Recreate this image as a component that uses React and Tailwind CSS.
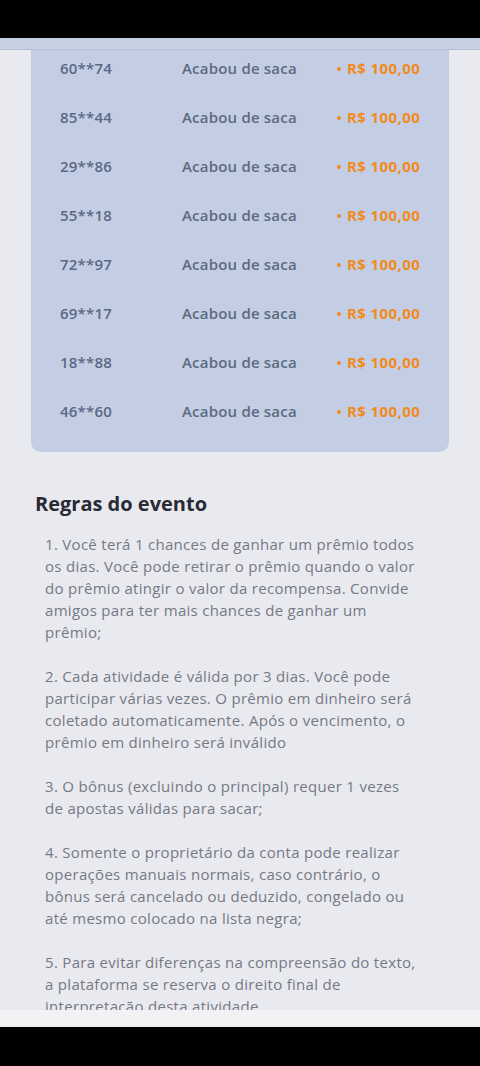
import React from 'react';

const winners = ['60**74', '85**44', '29**86', '55**18', '72**97', '69**17', '18**88', '46**60'];

// lines broken as in the app's layout
const rules = [
  [
    '1. Você terá 1 chances de ganhar um prêmio todos',
    'os dias. Você pode retirar o prêmio quando o valor',
    'do prêmio atingir o valor da recompensa. Convide',
    'amigos para ter mais chances de ganhar um',
    'prêmio;',
  ],
  [
    '2. Cada atividade é válida por 3 dias. Você pode',
    'participar várias vezes. O prêmio em dinheiro será',
    'coletado automaticamente. Após o vencimento, o',
    'prêmio em dinheiro será inválido',
  ],
  ['3. O bônus (excluindo o principal) requer 1 vezes', 'de apostas válidas para sacar;'],
  [
    '4. Somente o proprietário da conta pode realizar',
    'operações manuais normais, caso contrário, o',
    'bônus será cancelado ou deduzido, congelado ou',
    'até mesmo colocado na lista negra;',
  ],
  [
    '5. Para evitar diferenças na compreensão do texto,',
    'a plataforma se reserva o direito final de',
    'interpretação desta atividade',
  ],
];

const App = () => {
  return (
    <div className="w-[480px] h-[1066px] bg-black flex flex-col overflow-hidden" style={{ fontFamily: '"Open Sans", "Noto Sans", sans-serif' }}>
      <div className="h-[38px] shrink-0" />

      {/* Scroll area */}
      <div className="relative h-[972px] shrink-0 bg-[#e9e9f0] overflow-hidden">
        {/* Sticky header strip */}
        <div className="absolute top-0 left-0 right-0 h-[12px] bg-[#c7d1e4] border-b border-[#b3bed1] z-10" />

        {/* Winners card */}
        <div className="mx-[31px] bg-[#c3cee4] rounded-b-[10px] pt-[6px] pb-[16px]">
          {winners.map((id) => (
            <div key={id} className="h-[49px] flex items-center pl-[29px] text-[15px] font-semibold tracking-[0.2px]">
              <span className="w-[122px] text-[#5b6883]">{id}</span>
              <span className="w-[153px] text-[#5d6a80]">Acabou de saca</span>
              <span className="text-[#f28a1e] font-bold flex items-center gap-[6px] tracking-[0.4px]">
                <span className="w-[4px] h-[4px] ml-[2px] rounded-full bg-[#f28a1e]" />
                R$ 100,00
              </span>
            </div>
          ))}
        </div>

        {/* Rules */}
        <div className="px-[35px] pt-[39px]">
          <h2 className="text-[20px] leading-[26px] font-bold text-[#2a2a33]">Regras do evento</h2>
          <div className="pl-[10px] mt-[16px] flex flex-col gap-[22px] text-[15px] leading-[22px] tracking-[0.3px] text-[#767984]">
            {rules.map((lines) => (
              <p key={lines[0]}>
                {lines.map((l) => (
                  <span key={l} className="block whitespace-nowrap">{l}</span>
                ))}
              </p>
            ))}
          </div>
        </div>
      </div>

      <div className="h-[17px] shrink-0 bg-[#f2f2f4]" />
    </div>
  );
};

export default App;
